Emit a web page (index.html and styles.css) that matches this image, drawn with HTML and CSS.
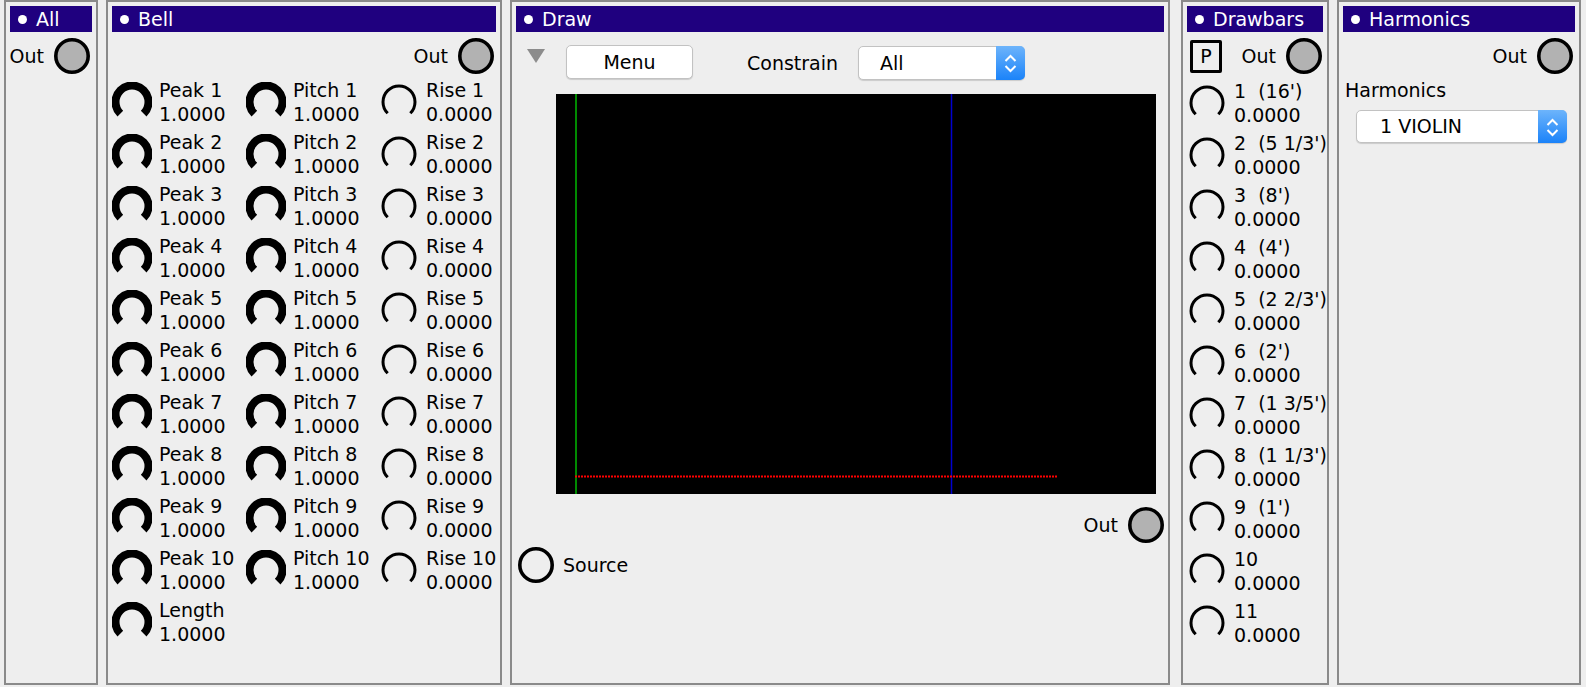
FILE: index.html
```html
<!DOCTYPE html>
<html>
<head>
<meta charset="utf-8">
<title>Flow</title>
<link rel="stylesheet" href="styles.css">
</head>
<body>
<svg class="defs" width="0" height="0" aria-hidden="true">
  <defs>
    <symbol id="k-full" viewBox="0 0 40 40"><path d="M8.33 31.67 A16.5 16.5 0 1 1 31.67 31.67" fill="none" stroke="#000" stroke-width="8"/></symbol>
    <symbol id="k-zero" viewBox="0 0 40 40"><path d="M8.69 31.31 A16 16 0 1 1 31.31 31.31" fill="none" stroke="#000" stroke-width="3"/></symbol>
    <symbol id="jack-out" viewBox="0 0 36 36"><circle cx="18" cy="18" r="16.2" fill="#b2b2b2" stroke="#000" stroke-width="3.6"/></symbol>
    <symbol id="jack-in" viewBox="0 0 36 36"><circle cx="18" cy="18" r="16.2" fill="none" stroke="#000" stroke-width="3.6"/></symbol>
    <symbol id="chev" viewBox="0 0 29 34"><path d="M9.5 15 L14.5 10 L19.5 15 M9.5 20 L14.5 25 L19.5 20" fill="none" stroke="#fff" stroke-width="2"/></symbol>
  </defs>
</svg>
<div class="rack">

  <section class="panel w-all">
    <div class="title"><span class="dot"></span>All</div>
    <div class="outrow"><span>Out</span><svg class="jack"><use href="#jack-out"/></svg></div>
  </section>

  <section class="panel w-bell">
    <div class="title"><span class="dot"></span>Bell</div>
    <div class="outrow"><span>Out</span><svg class="jack"><use href="#jack-out"/></svg></div>
    <div class="knobgrid">
      <div class="cell"><svg class="knob"><use href="#k-full"/></svg><div class="lbl">Peak 1
1.0000</div></div>
      <div class="cell"><svg class="knob"><use href="#k-full"/></svg><div class="lbl">Pitch 1
1.0000</div></div>
      <div class="cell"><svg class="knob"><use href="#k-zero"/></svg><div class="lbl">Rise 1
0.0000</div></div>
      <div class="cell"><svg class="knob"><use href="#k-full"/></svg><div class="lbl">Peak 2
1.0000</div></div>
      <div class="cell"><svg class="knob"><use href="#k-full"/></svg><div class="lbl">Pitch 2
1.0000</div></div>
      <div class="cell"><svg class="knob"><use href="#k-zero"/></svg><div class="lbl">Rise 2
0.0000</div></div>
      <div class="cell"><svg class="knob"><use href="#k-full"/></svg><div class="lbl">Peak 3
1.0000</div></div>
      <div class="cell"><svg class="knob"><use href="#k-full"/></svg><div class="lbl">Pitch 3
1.0000</div></div>
      <div class="cell"><svg class="knob"><use href="#k-zero"/></svg><div class="lbl">Rise 3
0.0000</div></div>
      <div class="cell"><svg class="knob"><use href="#k-full"/></svg><div class="lbl">Peak 4
1.0000</div></div>
      <div class="cell"><svg class="knob"><use href="#k-full"/></svg><div class="lbl">Pitch 4
1.0000</div></div>
      <div class="cell"><svg class="knob"><use href="#k-zero"/></svg><div class="lbl">Rise 4
0.0000</div></div>
      <div class="cell"><svg class="knob"><use href="#k-full"/></svg><div class="lbl">Peak 5
1.0000</div></div>
      <div class="cell"><svg class="knob"><use href="#k-full"/></svg><div class="lbl">Pitch 5
1.0000</div></div>
      <div class="cell"><svg class="knob"><use href="#k-zero"/></svg><div class="lbl">Rise 5
0.0000</div></div>
      <div class="cell"><svg class="knob"><use href="#k-full"/></svg><div class="lbl">Peak 6
1.0000</div></div>
      <div class="cell"><svg class="knob"><use href="#k-full"/></svg><div class="lbl">Pitch 6
1.0000</div></div>
      <div class="cell"><svg class="knob"><use href="#k-zero"/></svg><div class="lbl">Rise 6
0.0000</div></div>
      <div class="cell"><svg class="knob"><use href="#k-full"/></svg><div class="lbl">Peak 7
1.0000</div></div>
      <div class="cell"><svg class="knob"><use href="#k-full"/></svg><div class="lbl">Pitch 7
1.0000</div></div>
      <div class="cell"><svg class="knob"><use href="#k-zero"/></svg><div class="lbl">Rise 7
0.0000</div></div>
      <div class="cell"><svg class="knob"><use href="#k-full"/></svg><div class="lbl">Peak 8
1.0000</div></div>
      <div class="cell"><svg class="knob"><use href="#k-full"/></svg><div class="lbl">Pitch 8
1.0000</div></div>
      <div class="cell"><svg class="knob"><use href="#k-zero"/></svg><div class="lbl">Rise 8
0.0000</div></div>
      <div class="cell"><svg class="knob"><use href="#k-full"/></svg><div class="lbl">Peak 9
1.0000</div></div>
      <div class="cell"><svg class="knob"><use href="#k-full"/></svg><div class="lbl">Pitch 9
1.0000</div></div>
      <div class="cell"><svg class="knob"><use href="#k-zero"/></svg><div class="lbl">Rise 9
0.0000</div></div>
      <div class="cell"><svg class="knob"><use href="#k-full"/></svg><div class="lbl">Peak 10
1.0000</div></div>
      <div class="cell"><svg class="knob"><use href="#k-full"/></svg><div class="lbl">Pitch 10
1.0000</div></div>
      <div class="cell"><svg class="knob"><use href="#k-zero"/></svg><div class="lbl">Rise 10
0.0000</div></div>
      <div class="cell"><svg class="knob"><use href="#k-full"/></svg><div class="lbl">Length
1.0000</div></div>
    </div>
  </section>

  <section class="panel w-draw">
    <div class="title"><span class="dot"></span>Draw</div>
    <div class="toolbar">
      <span class="tri"></span>
      <div class="btn">Menu</div>
      <span class="clabel">Constrain</span>
      <div class="select sel-constrain"><span class="val">All</span><span class="arrows"><svg class="chev"><use href="#chev"/></svg></span></div>
    </div>
    <div class="canvas">
      <svg class="plot" width="600" height="400" viewBox="0 0 600 400">
        <line x1="20" y1="0" x2="20" y2="400" stroke="#008a00" stroke-width="2"/>
        <line x1="395.5" y1="0" x2="395.5" y2="400" stroke="#0000d0" stroke-width="1.5"/>
        <line x1="19" y1="382.5" x2="501" y2="382.5" stroke="#ff0000" stroke-width="2" stroke-dasharray="2 1"/>
      </svg>
    </div>
    <div class="outrow out-draw"><span>Out</span><svg class="jack"><use href="#jack-out"/></svg></div>
    <div class="srcrow"><svg class="jack"><use href="#jack-in"/></svg><span>Source</span></div>
  </section>

  <section class="panel w-bars">
    <div class="title"><span class="dot"></span>Drawbars</div>
    <div class="barstop">
      <span class="pbox">P</span>
      <span class="outgrp"><span>Out</span><svg class="jack"><use href="#jack-out"/></svg></span>
    </div>
    <div class="barlist">
      <div class="cell"><svg class="knob"><use href="#k-zero"/></svg><div class="lbl">1  (16')
0.0000</div></div>
      <div class="cell"><svg class="knob"><use href="#k-zero"/></svg><div class="lbl">2  (5 1/3')
0.0000</div></div>
      <div class="cell"><svg class="knob"><use href="#k-zero"/></svg><div class="lbl">3  (8')
0.0000</div></div>
      <div class="cell"><svg class="knob"><use href="#k-zero"/></svg><div class="lbl">4  (4')
0.0000</div></div>
      <div class="cell"><svg class="knob"><use href="#k-zero"/></svg><div class="lbl">5  (2 2/3')
0.0000</div></div>
      <div class="cell"><svg class="knob"><use href="#k-zero"/></svg><div class="lbl">6  (2')
0.0000</div></div>
      <div class="cell"><svg class="knob"><use href="#k-zero"/></svg><div class="lbl">7  (1 3/5')
0.0000</div></div>
      <div class="cell"><svg class="knob"><use href="#k-zero"/></svg><div class="lbl">8  (1 1/3')
0.0000</div></div>
      <div class="cell"><svg class="knob"><use href="#k-zero"/></svg><div class="lbl">9  (1')
0.0000</div></div>
      <div class="cell"><svg class="knob"><use href="#k-zero"/></svg><div class="lbl">10
0.0000</div></div>
      <div class="cell"><svg class="knob"><use href="#k-zero"/></svg><div class="lbl">11
0.0000</div></div>
    </div>
  </section>

  <section class="panel w-harm">
    <div class="title"><span class="dot"></span>Harmonics</div>
    <div class="outrow"><span>Out</span><svg class="jack"><use href="#jack-out"/></svg></div>
    <div class="hlabel">Harmonics</div>
    <div class="select sel-harm"><span class="val">1 VIOLIN</span><span class="arrows"><svg class="chev"><use href="#chev"/></svg></span></div>
  </section>

</div>
</body>
</html>
```

FILE: styles.css
```css
* { box-sizing: border-box; }
html, body { margin: 0; padding: 0; }
body {
  background: #eeeeee;
  font-family: "DejaVu Sans", "Liberation Sans", sans-serif;
  font-size: 19px;
  color: #000;
  width: 1586px;
  height: 687px;
  overflow: hidden;
}
.defs { position: absolute; width: 0; height: 0; overflow: hidden; }

.rack {
  display: flex;
  gap: 8px;
  padding-left: 4px;
  height: 685px;
}
.panel {
  flex: none;
  height: 685px;
  border: 2px solid #8a8a8a;
  padding: 4px;
  display: flex;
  flex-direction: column;
}
.w-all { width: 94px; }
.w-bell { width: 396px; }
.w-draw { width: 660px; }
.w-bars { width: 148px; margin-left: 3px; }
.w-harm { width: 244px; }

.title {
  height: 26px;
  background: #1f007f;
  color: #fff;
  display: flex;
  align-items: center;
  padding-left: 8px;
  padding-top: 1px;
  line-height: 25px;
  white-space: nowrap;
  overflow: hidden;
}
.dot {
  width: 9px;
  height: 9px;
  border-radius: 50%;
  background: #fff;
  margin-right: 9px;
  flex: none;
}

.jack { width: 36px; height: 36px; flex: none; display: block; }

.outrow {
  display: flex;
  justify-content: flex-end;
  align-items: center;
  gap: 10px;
  height: 36px;
  margin-top: 6px;
  padding-right: 2px;
  line-height: 24px;
}

.knobgrid {
  display: grid;
  grid-template-columns: 134px 133px 1fr;
  grid-auto-rows: 48px;
  row-gap: 4px;
  margin-top: 4px;
}
.cell {
  display: flex;
  align-items: center;
  gap: 7px;
  height: 48px;
}
.knob { width: 40px; height: 40px; flex: none; display: block; }
.lbl { line-height: 24px; white-space: pre; }

/* Draw */
.toolbar {
  display: flex;
  align-items: flex-start;
  margin-top: 13px;
  height: 35px;
}
.tri {
  width: 0;
  height: 0;
  border-left: 9.5px solid transparent;
  border-right: 9.5px solid transparent;
  border-top: 14px solid #8c8c8c;
  margin: 4px 0 0 11px;
}
.btn {
  margin-left: 21px;
  width: 127px;
  height: 34px;
  background: #fff;
  border: 1px solid #c2c2c2;
  border-radius: 5px;
  box-shadow: 0 1px 1px rgba(0, 0, 0, 0.15);
  text-align: center;
  line-height: 32px;
}
.clabel {
  margin-left: 54px;
  line-height: 35px;
  margin-top: 1px;
}
.select {
  display: flex;
  background: #fff;
  border: 1px solid #c2c2c2;
  border-radius: 5px;
  box-shadow: 0 1px 1px rgba(0, 0, 0, 0.15);
}
.select .val { flex: 1; padding-left: 21px; line-height: 32px; white-space: nowrap; }
.select .arrows {
  width: 29px;
  margin: -1px -1px -1px 0;
  border-radius: 0 5px 5px 0;
  background: linear-gradient(#6db4fb, #1b83f9);
  display: flex;
  align-items: center;
}
.chev { width: 29px; height: 34px; display: block; }
.sel-constrain { margin-left: 20px; width: 167px; height: 34px; margin-top: 1px; }

.canvas {
  margin: 14px 0 0 40px;
  width: 600px;
  height: 400px;
  background: #000;
}
.plot { display: block; }
.out-draw { margin-top: 13px; padding-right: 0; }
.srcrow {
  display: flex;
  align-items: center;
  gap: 9px;
  height: 36px;
  margin-top: 4px;
  padding-left: 2px;
}

/* Drawbars */
.barstop {
  display: flex;
  align-items: center;
  height: 36px;
  margin-top: 6px;
}
.pbox {
  margin-left: 3px;
  width: 32px;
  height: 33px;
  border: 3px solid #000;
  border-radius: 2px;
  display: flex;
  align-items: center;
  justify-content: center;
  line-height: 24px;
}
.outgrp {
  margin-left: auto;
  display: flex;
  align-items: center;
  gap: 10px;
  padding-right: 1px;
}
.barlist {
  display: flex;
  flex-direction: column;
  gap: 4px;
  margin-top: 5px;
}

/* Harmonics */
.hlabel { margin-top: 4px; line-height: 24px; padding-left: 2px; }
.sel-harm { margin: 8px 0 0 13px; width: 211px; height: 33px; }
.sel-harm .val { line-height: 31px; padding-left: 23px; }
```
